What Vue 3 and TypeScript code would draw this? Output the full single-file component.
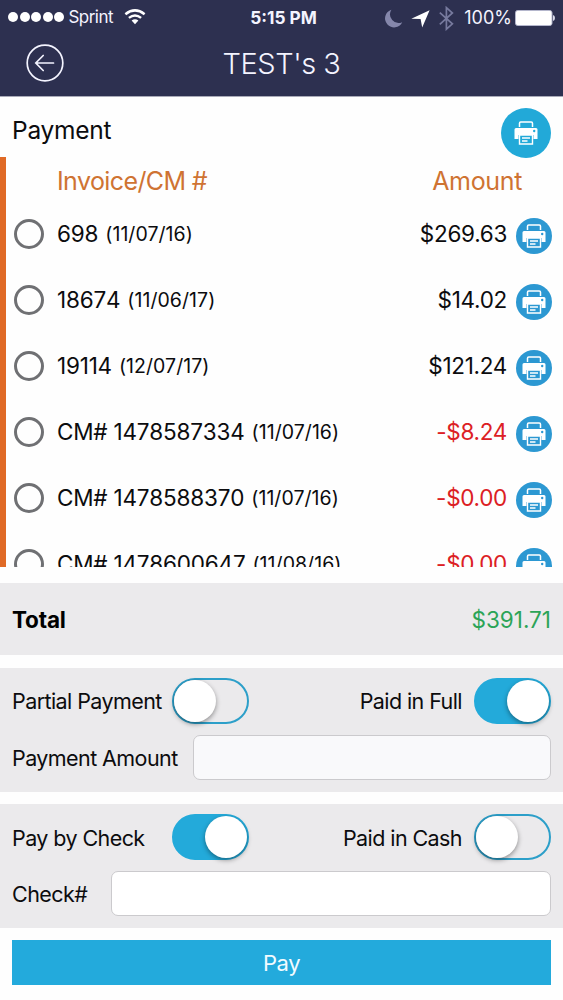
<script setup lang="ts">
import { ref } from 'vue'

interface Entry {
  id: string
  date: string
  amount: string
  credit: boolean
}

const entries: Entry[] = [
  { id: '698', date: '(11/07/16)', amount: '$269.63', credit: false },
  { id: '18674', date: '(11/06/17)', amount: '$14.02', credit: false },
  { id: '19114', date: '(12/07/17)', amount: '$121.24', credit: false },
  { id: 'CM# 1478587334', date: '(11/07/16)', amount: '-$8.24', credit: true },
  { id: 'CM# 1478588370', date: '(11/07/16)', amount: '-$0.00', credit: true },
  { id: 'CM# 1478600647', date: '(11/08/16)', amount: '-$0.00', credit: true },
]

const full = ref(true)
const check = ref(true)
</script>

<template>
  <div class="screen">
    <header class="top">
      <div class="status">
        <div class="carrier">
          <i v-for="n in 5" :key="n" class="dot"></i>
          <span class="sprint">Sprint</span>
          <svg class="wifi" width="22" height="16" viewBox="0 0 22 16" fill="none" stroke="#fff">
            <path d="M1.4 5.2 Q11 -2.4 20.6 5.2" stroke-width="2.5" />
            <path d="M4.9 8.9 Q11 3.9 17.1 8.9" stroke-width="2.4" />
            <path d="M7.6 11.6 Q11 8.9 14.4 11.6 L11 15.2 Z" fill="#fff" stroke="none" />
          </svg>
        </div>
        <span class="time">5:15 PM</span>
        <div class="indicators">
          <svg class="moon" width="18" height="19" viewBox="0 0 18 19">
            <path d="M6.4 0.8 A9 9 0 1 0 17.2 13.2 A8.6 8.6 0 0 1 6.4 0.8 Z" fill="#8587ab" />
          </svg>
          <svg class="arrow" width="19" height="18" viewBox="0 0 19 18">
            <path d="M18.6 0.3 L0.3 8.7 L9.6 8.9 L11.2 17.6 Z" fill="#fff" />
          </svg>
          <svg class="bt" width="15" height="25" viewBox="0 0 15 25" fill="none" stroke="#777a9e" stroke-width="1.7">
            <path d="M0.8 6.6 L13.4 17.8 L7.4 23.2 V1.6 L13.4 7 L0.8 18.4" />
          </svg>
          <span class="pct">100%</span>
          <svg class="battery" width="40" height="16" viewBox="0 0 40 16">
            <rect x="0.5" y="0.5" width="36.5" height="15" rx="2.2" fill="#fff" stroke="#b4b6cc" />
            <path d="M38 5 Q40 5.6 40 8 Q40 10.4 38 11 Z" fill="#d9daea" />
          </svg>
        </div>
      </div>
      <div class="nav">
        <svg class="back" width="38" height="38" viewBox="0 0 38 38" fill="none" stroke="#f4f4ff" stroke-linecap="round">
          <circle cx="19" cy="19" r="17.8" stroke-width="1.7" />
          <path d="M27.5 19 H10 M17.2 11.5 L9.8 19 L17.2 26.5" stroke-width="1.7" />
        </svg>
        <h1 class="title">TEST's 3</h1>
      </div>
    </header>

    <div class="section-head">
      <span class="heading">Payment</span>
      <button class="print large">
        <svg width="24" height="24" viewBox="0 0 24 24">
          <path d="M5.5 6 V2.2 Q5.5 1 6.7 1 H17.3 Q18.5 1 18.5 2.2 V6" fill="none" stroke="#fff" stroke-width="1.5" />
          <path d="M2 7 H22 Q23.5 7 23.5 8.5 V18 H19.5 V14 H4.5 V18 H0.5 V8.5 Q0.5 7 2 7 Z" fill="#fff" />
          <path d="M5.5 14 H18.5 V23 H5.5 Z M8 17 H16 M8 20 H13.5" fill="none" stroke="#fff" stroke-width="1.4" />
          <circle cx="20.2" cy="10" r="1.2" fill="#22a9d8" />
        </svg>
      </button>
    </div>

    <section class="list">
      <div class="columns"><span class="col-id">Invoice/CM #</span><span class="col-amt">Amount</span></div>
      <div v-for="e in entries" :key="e.id" class="row">
        <span class="radio"></span>
        <span class="ident">{{ e.id }}</span>
        <span class="date">{{ e.date }}</span>
        <span class="amount" :class="{ credit: e.credit }">{{ e.amount }}</span>
        <button class="print">
          <svg width="24" height="24" viewBox="0 0 24 24">
            <path d="M5.5 6 V2.2 Q5.5 1 6.7 1 H17.3 Q18.5 1 18.5 2.2 V6" fill="none" stroke="#fff" stroke-width="1.5" />
            <path d="M2 7 H22 Q23.5 7 23.5 8.5 V18 H19.5 V14 H4.5 V18 H0.5 V8.5 Q0.5 7 2 7 Z" fill="#fff" />
            <path d="M5.5 14 H18.5 V23 H5.5 Z M8 17 H16 M8 20 H13.5" fill="none" stroke="#fff" stroke-width="1.4" />
            <circle cx="20.2" cy="10" r="1.2" fill="#2c98d2" />
          </svg>
        </button>
      </div>
    </section>

    <section class="total">
      <strong class="total-label">Total</strong>
      <span class="total-value">$391.71</span>
    </section>

    <section class="panel">
      <div class="switches">
        <span class="label">Partial Payment</span>
        <button class="switch" :class="{ on: !full }" @click="full = !full"><i class="knob"></i></button>
        <span class="label right">Paid in Full</span>
        <button class="switch" :class="{ on: full }" @click="full = !full"><i class="knob"></i></button>
      </div>
      <label class="field">
        <span class="label">Payment Amount</span>
        <input class="input dim" type="text" />
      </label>
    </section>

    <section class="panel second">
      <div class="switches">
        <span class="label">Pay by Check</span>
        <button class="switch" :class="{ on: check }" @click="check = !check"><i class="knob"></i></button>
        <span class="label right">Paid in Cash</span>
        <button class="switch" :class="{ on: !check }" @click="check = !check"><i class="knob"></i></button>
      </div>
      <label class="field">
        <span class="label short">Check#</span>
        <input class="input" type="text" />
      </label>
    </section>

    <button class="pay">Pay</button>
  </div>
</template>

<style>
html,
body {
  background: #fefefe;
  overflow: hidden;
}
</style>

<style scoped>
.screen {
  width: 563px;
  height: 1000px;
  overflow: hidden;
  background: #fefefe;
  color: #0c0c0e;
  font-family: Inter, "Liberation Sans", sans-serif;
  display: flex;
  flex-direction: column;
}
.screen * { box-sizing: border-box; }
span, strong, h1 { white-space: nowrap; }
svg { display: block; flex: none; }
button { border: 0; padding: 0; font-family: inherit; }

.top {
  height: 97px;
  flex: none;
  background: #2d3050;
  border-bottom: 1px solid #a9aab8;
  color: #f4f4ff;
}
.status {
  height: 34px;
  display: grid;
  grid-template-columns: 1fr auto 1fr;
  align-items: center;
  padding: 0 8px;
}
.carrier { display: flex; align-items: center; }
.dot { width: 10px; height: 10px; margin-right: 1.5px; border-radius: 50%; background: #fff; }
.sprint { font-size: 17px; margin-left: 3px; letter-spacing: -0.55px; }
.wifi { margin-left: 11px; }
.time { font-size: 17.3px; font-weight: 700; letter-spacing: 0; padding-left: 4px; }
.indicators { display: flex; align-items: center; justify-content: flex-end; }
.moon { margin-top: 2px; }
.arrow { margin-left: 8px; margin-top: 3px; }
.bt { margin-left: 9px; margin-top: 3px; }
.pct { font-size: 18px; margin-left: 10px; letter-spacing: 0; }
.battery { margin-left: 3px; margin-top: 1px; }

.nav {
  height: 58px;
  padding: 0 26px;
  display: grid;
  grid-template-columns: 38px 1fr 38px;
  align-items: center;
}
.title { margin: 0; text-align: center; font-size: 29px; font-weight: 300; letter-spacing: -0.45px; }

.section-head {
  height: 60px;
  flex: none;
  padding: 11px 12px 0 12px;
  display: flex;
  align-items: flex-start;
  justify-content: space-between;
}
.heading { font-size: 24.5px; line-height: 45px; letter-spacing: -0.25px; }
.print {
  width: 36px;
  height: 36px;
  border-radius: 50%;
  background: #2c98d2;
  display: flex;
  align-items: center;
  justify-content: center;
  flex: none;
}
.large { width: 50px; height: 50px; background: #22a9d8; }

.list {
  height: 410px;
  flex: none;
  overflow: hidden;
  border-left: 6px solid #e06a26;
}
.columns {
  height: 44px;
  padding: 0 41px 0 51px;
  display: flex;
  justify-content: space-between;
  color: #cf7332;
  font-size: 25px;
  line-height: 48px;
}
.col-id { letter-spacing: -0.6px; }
.col-amt { letter-spacing: -0.35px; }
.row { height: 66px; padding: 0 11px 0 8px; display: flex; align-items: center; }
.radio { width: 30px; height: 30px; border: 3px solid #6f7073; border-radius: 50%; margin-right: 13px; }
.ident { font-size: 22.5px; letter-spacing: -0.2px; padding-bottom: 2px; font-kerning: none; }
.date { font-size: 19.5px; margin-left: 7px; letter-spacing: 0.05px; }
.amount { margin-left: auto; margin-right: 9px; font-size: 22.5px; letter-spacing: -0.3px; padding-bottom: 2px; }
.credit { color: #dc2024; }
.row .print { margin-top: 3px; }

.total {
  margin-top: 16px;
  height: 72px;
  flex: none;
  background: #ebeaec;
  padding: 0 12px;
  display: flex;
  align-items: center;
  justify-content: space-between;
}
.total-label { font-size: 22.5px; font-weight: 700; color: #000; letter-spacing: -0.15px; }
.total-value { font-size: 22.5px; color: #2ba457; }

.panel {
  margin-top: 13px;
  height: 124px;
  flex: none;
  background: #ebeaec;
  padding: 10px 12px 12px;
  display: flex;
  flex-direction: column;
  justify-content: space-between;
}
.second { margin-top: 12px; }
.switches { height: 46px; display: grid; grid-template-columns: 160px 77px 1fr 77px; align-items: center; }
.label { font-size: 21.5px; letter-spacing: -0.58px; }
.second .switches .label { padding-top: 2px; }
.right { text-align: right; padding-right: 12px; }
.switch {
  width: 77px;
  height: 46px;
  border-radius: 23px;
  border: 2px solid #2c9fc9;
  background: #ebeaec;
  display: flex;
  align-items: center;
}
.switch.on { background: #23aada; border-color: #23aada; justify-content: flex-end; }
.knob {
  width: 42px;
  height: 42px;
  border-radius: 50%;
  background: #fff;
  box-shadow: 0 2px 5px rgba(0, 0, 0, 0.4);
}
.field { display: flex; align-items: center; }
.field .label { width: 181px; flex: none; }
.field .short { width: 99px; }
.input {
  flex: 1;
  min-width: 0;
  height: 45px;
  border: 1px solid #cbcacd;
  border-radius: 7px;
  background: #fff;
  outline: none;
}
.dim { background: #f9f9fb; }

.pay {
  margin: 12px 12px 0;
  height: 45px;
  flex: none;
  background: #23aadc;
  color: #f2fbff;
  font-size: 22px;
  letter-spacing: -0.4px;
}
</style>
